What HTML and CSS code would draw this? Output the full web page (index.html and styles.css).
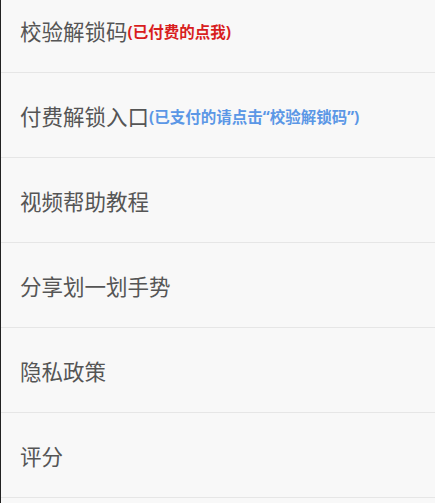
FILE: index.html
```html
<!DOCTYPE html>
<html>
<head>
    <meta charset="utf-8">
    <link rel="stylesheet" href="styles.css">
</head>
<body>
    <ul class="menu">
        <li class="menu-item">校验解锁码<span class="note note-red">(已付费的点我)</span></li>
        <li class="menu-item">付费解锁入口<span class="note note-blue">(已支付的请点击“校验解锁码”)</span></li>
        <li class="menu-item">视频帮助教程</li>
        <li class="menu-item">分享划一划手势</li>
        <li class="menu-item">隐私政策</li>
        <li class="menu-item">评分</li>
    </ul>
</body>
</html>
```

FILE: styles.css
```css
html, body {
    height: 100%;
}

body {
    margin: 0;
    background: #f8f8f8;
    border-left: 1px solid #222;
    font-family: "Noto Sans CJK SC", sans-serif;
    overflow: hidden;
}

.menu {
    list-style: none;
    margin: -12px 0 0 0;
    padding: 0;
}

.menu-item {
    display: flex;
    align-items: center;
    height: 80px;
    padding: 2px 0 2px 19px;
    border-bottom: 1px solid #e6e6e6;
    font-size: 21.5px;
    color: #555;
}

.note {
    font-family: "Noto Sans", "Noto Sans CJK SC", sans-serif;
    font-size: 15.5px;
    font-weight: bold;
    margin-top: 2px;
}

.note-red {
    color: #d81e1e;
}

.note-blue {
    color: #5b97e6;
}
```
